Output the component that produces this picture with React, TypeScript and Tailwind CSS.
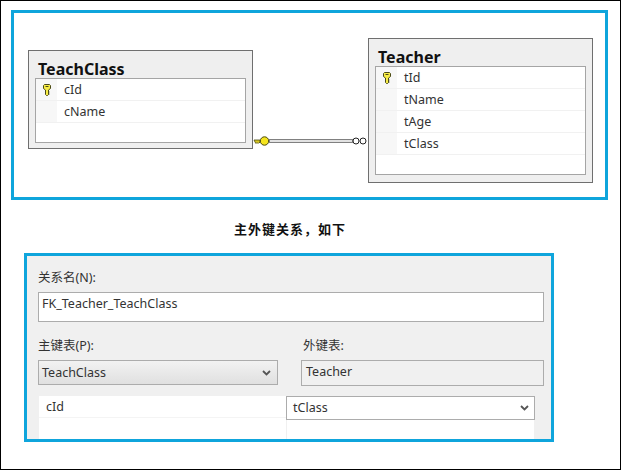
const uiFont = "font-['Noto_Sans','Noto_Sans_CJK_SC',sans-serif]";

function KeyIcon() {
  return (
    <svg width="8" height="12" viewBox="0 0 8 12">
      <path
        d="M1.500.500h5l1 1v3L5.500 6v4.500l-1 1h-1L2.500 10.500V6L.500 4.500v-3z"
        fill="#f7ec45"
        stroke="#4a4a18"
        strokeWidth="1"
      />
      <path d="M2.500 2.500h3" stroke="#4a4a18" strokeWidth="1" />
      <path d="M5 8h1.500M5 10h1.500" stroke="#4a4a18" strokeWidth="1" />
    </svg>
  );
}

function FieldRow({ name, primary }: { name: string; primary?: boolean }) {
  return (
    <div className="flex h-[22px] border-b border-[#f1f1f1]">
      <div className="flex w-[21px] shrink-0 items-center justify-center bg-[#f7f7f7]">
        {primary && <KeyIcon />}
      </div>
      <div className="pl-[7px] pt-[1px] text-[12.5px] leading-[20px] text-[#333]">{name}</div>
    </div>
  );
}

function TableBox({ title, fields, className }: { title: string; fields: string[]; className: string }) {
  return (
    <div className={`w-[225px] shrink-0 border border-[#6f6f6f] bg-[#efefef] px-[6px] pb-[6px] ${className}`}>
      <div className="h-[27px] pl-[3px] pt-[8px] text-[16px] font-bold leading-[20px] text-[#111]">{title}</div>
      <div className="border border-[#a5a5a5] bg-white">
        {fields.map((field, i) => (
          <FieldRow key={field} name={field} primary={i === 0} />
        ))}
        <div className="h-[19px]" />
      </div>
    </div>
  );
}

function Connector() {
  return (
    <svg width="115" height="14" viewBox="0 0 115 14" className="mt-[121px] shrink-0">
      <path d="M1 6h6v2.500H6l-1 1-1-1-1 1-1-1.500z" fill="#d8c820" stroke="#4a4a10" strokeWidth="0.800" />
      <circle cx="11.500" cy="7" r="4.200" fill="#f5e41e" stroke="#4a4a10" strokeWidth="1" />
      <rect x="16.500" y="5.500" width="83" height="3" fill="#e2e2e2" stroke="#808080" strokeWidth="1" />
      <circle cx="103" cy="7" r="3" fill="white" stroke="#222" strokeWidth="1" />
      <circle cx="110" cy="7" r="3" fill="white" stroke="#222" strokeWidth="1" />
    </svg>
  );
}

function Chevron() {
  return (
    <svg width="9" height="6" viewBox="0 0 9 6">
      <path d="M1 1l3.500 3.500L8 1" fill="none" stroke="#555" strokeWidth="1.800" />
    </svg>
  );
}

export default function App() {
  return (
    <div className={`h-[470px] w-[621px] overflow-hidden border border-black bg-white ${uiFont}`}>
      {/* diagram */}
      <div className="ml-[10px] mt-[9px] flex h-[190px] w-[597px] border-[3px] border-[#0fa5dc] pl-[14px]">
        <TableBox title="TeachClass" fields={["cId", "cName"]} className="mt-[37px] h-[99px]" />
        <Connector />
        <TableBox title="Teacher" fields={["tId", "tName", "tAge", "tClass"]} className="mt-[25px] h-[145px]" />
      </div>

      <div className="mt-[20px] pr-[41px] text-center text-[13px] font-bold leading-[18px] tracking-[1px] text-[#111]">
        主外键关系，如下
      </div>

      {/* relationship form */}
      <div className="ml-[23px] mt-[15px] h-[189px] w-[530px] border-[3px] border-[#0fa5dc] bg-[#f0f0f0] text-[12.5px] text-[#333]">
        <div className="px-[11px] pt-[13px]">
          <div className="h-[23px] leading-[18px]">关系名(N):</div>
          <div className="h-[30px] w-[506px] border border-[#acacac] bg-white pl-[3px] pt-[2px] leading-[18px]">
            FK_Teacher_TeachClass
          </div>
        </div>
        <div className="mt-[14px] flex pl-[11px]">
          <div className="w-[263px]">
            <div className="h-[24px] pt-[1px] leading-[18px]">主键表(P):</div>
            <div className="flex h-[25px] w-[240px] items-center justify-between border border-[#acacac] bg-gradient-to-b from-[#f2f2f2] to-[#e0e0e0] pl-[3px] pr-[6px] pt-[1px]">
              <span>TeachClass</span>
              <Chevron />
            </div>
          </div>
          <div>
            <div className="h-[24px] pl-[2px] pt-[1px] leading-[18px]">外键表:</div>
            <div className="h-[26px] w-[243px] border border-[#acacac] bg-[#f0f0f0] pl-[4px] pt-[2px] leading-[18px]">
              Teacher
            </div>
          </div>
        </div>
        <div className="ml-[12px] mt-[10px] flex h-[43px] w-[496px] bg-white">
          <div className="h-[22px] w-[247px] border-b border-[#f4f4f4] pl-[7px] pt-[1px] leading-[20px]">cId</div>
          <div className="flex w-[249px] flex-col">
            <div className="flex h-[24px] items-center justify-between border border-[#acacac] bg-white pl-[6px] pr-[5px]">
              <span>tClass</span>
              <Chevron />
            </div>
            <div className="flex-1 border-x border-[#f0f0f0]" />
          </div>
        </div>
      </div>
    </div>
  );
}
